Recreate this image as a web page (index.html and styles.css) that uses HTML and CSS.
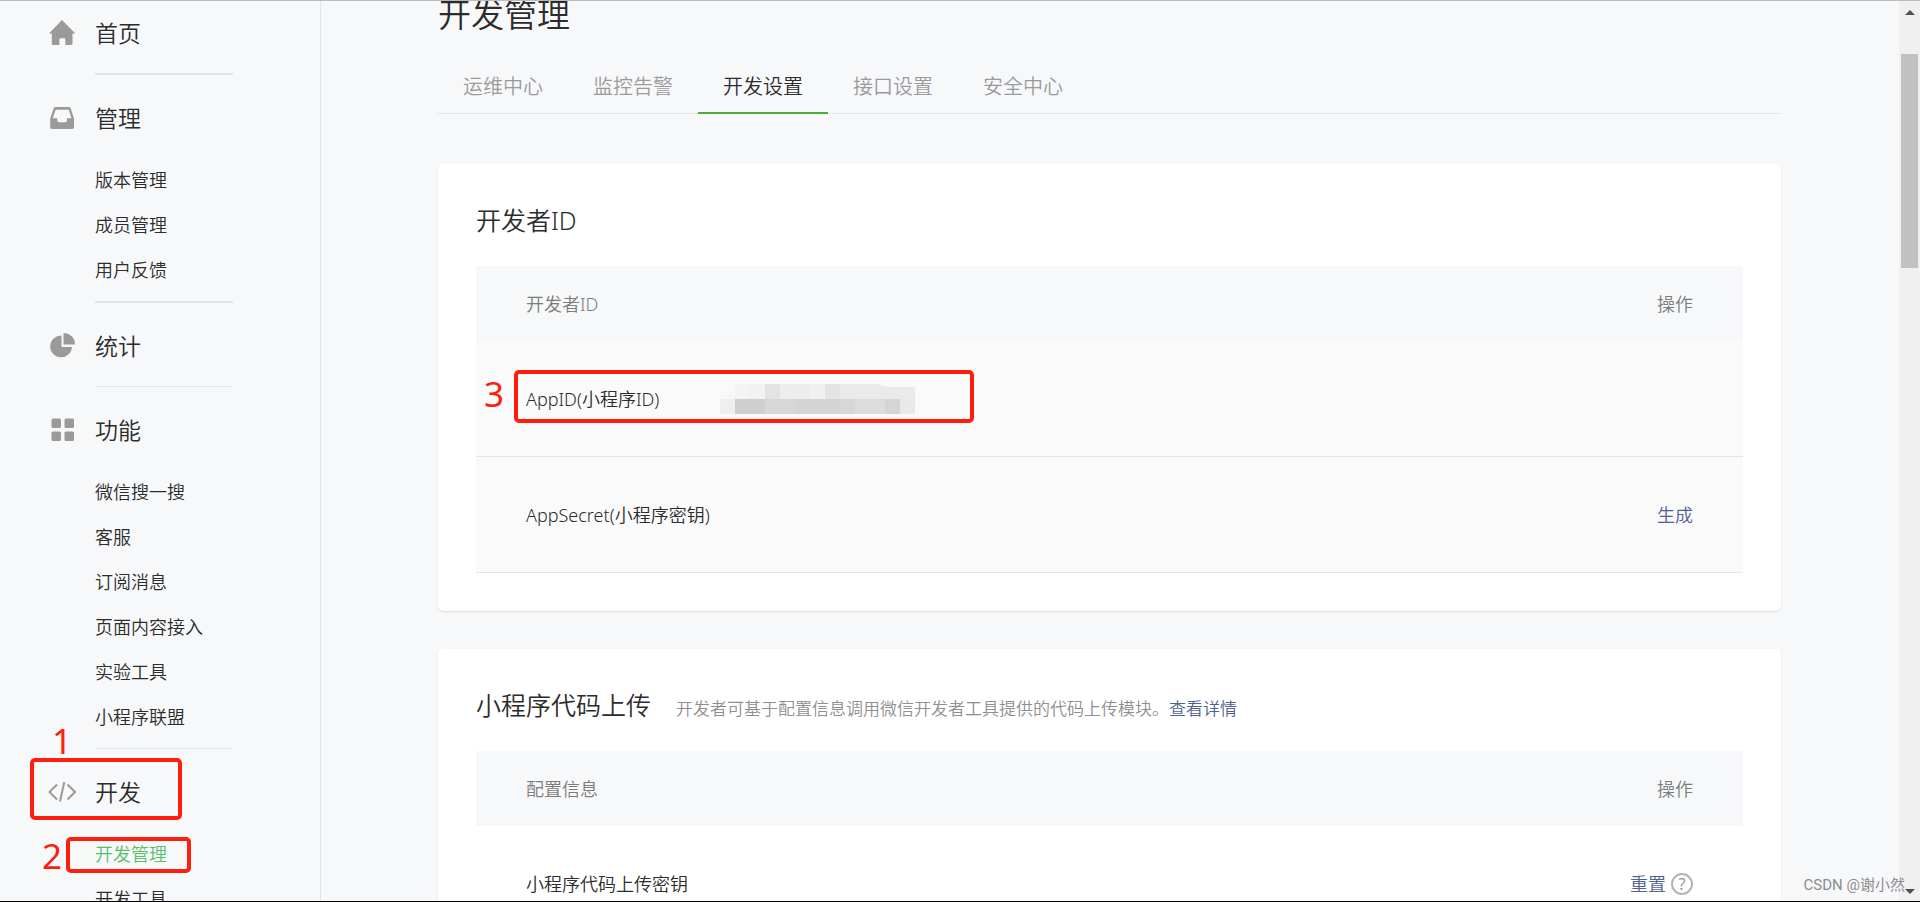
FILE: index.html
```html
<!DOCTYPE html>
<html lang="zh-CN">
<head>
<meta charset="utf-8">
<title>开发管理</title>
<link rel="stylesheet" href="styles.css">
</head>
<body>
<div class="page">
  <nav class="sidebar" aria-label="主导航">
    <section class="group">
      <a class="group-title" href="#">
        <svg class="icon" viewBox="0 0 28 28"><path d="M14 1 27.300 14.600H24.500V24.500Q24.500 26 23 26H17.300V20.500Q17.300 19.300 16.100 19.300H12.600Q11.400 19.300 11.400 20.500V26H5.300Q3.800 26 3.800 24.500V14.600H.9Z"/></svg>
        首页
      </a>
    </section>
    <section class="group thick">
      <a class="group-title" href="#">
        <svg class="icon" viewBox="0 0 28 28"><path fill-rule="evenodd" d="M7.500 3H21Q22.300 3 22.700 4.200L26 14.500V23.200Q26 25 24.200 25H4Q2.200 25 2.200 23.200V14.500L5.700 4.200Q6.200 3 7.500 3ZM7.700 5.700 4.700 14.200H9.300V16Q9.300 18.200 11.200 18.200H17.200Q19 18.200 19 16V14.200H23.400L20.700 5.700Z"/></svg>
        管理
      </a>
      <ul class="sub">
        <li><a href="#">版本管理</a></li>
        <li><a href="#">成员管理</a></li>
        <li><a href="#">用户反馈</a></li>
      </ul>
    </section>
    <section class="group thick">
      <a class="group-title" href="#">
        <svg class="icon" viewBox="0 0 28 28"><path d="M13.500 3.500A10.900 10.900 0 1 0 24 15H13.500Z"/><path d="M15.500 1A11.500 11.500 0 0 1 27 12.500H15.500Z"/></svg>
        统计
      </a>
    </section>
    <section class="group">
      <a class="group-title" href="#">
        <svg class="icon" viewBox="0 0 28 28"><rect x="3.500" y="2.500" width="9.500" height="9.500" rx="1.500"/><rect x="16.500" y="2.500" width="9.500" height="9.500" rx="1.500"/><rect x="3.500" y="15.500" width="9.500" height="9.500" rx="1.500"/><rect x="16.500" y="15.500" width="9.500" height="9.500" rx="1.500"/></svg>
        功能
      </a>
      <ul class="sub">
        <li><a href="#">微信搜一搜</a></li>
        <li><a href="#">客服</a></li>
        <li><a href="#">订阅消息</a></li>
        <li><a href="#">页面内容接入</a></li>
        <li><a href="#">实验工具</a></li>
        <li><a href="#">小程序联盟</a></li>
      </ul>
    </section>
    <section class="group">
      <div class="marked">
        <a class="group-title" href="#">
          <svg class="icon line" viewBox="0 0 28 28"><path d="M9 6.500 1.500 14 9 21.500M19.500 6.500 27 14 19.500 21.500M16.300 4 12 23.500"/></svg>
          开发
        </a>
        <span class="mark mark-one"><b class="num">1</b></span>
      </div>
      <ul class="sub">
        <li class="marked"><a class="current" href="#">开发管理</a><span class="mark mark-two"><b class="num">2</b></span></li>
        <li><a href="#">开发工具</a></li>
      </ul>
    </section>
  </nav>

  <main class="content">
    <h1 class="page-title">开发管理</h1>
    <nav class="tabs" aria-label="开发管理">
      <a class="tab" href="#">运维中心</a>
      <a class="tab" href="#">监控告警</a>
      <a class="tab active" href="#">开发设置</a>
      <a class="tab" href="#">接口设置</a>
      <a class="tab" href="#">安全中心</a>
    </nav>

    <section class="card">
      <header class="card-head"><h2>开发者ID</h2></header>
      <table class="table shaded">
        <thead><tr><th>开发者ID</th><th class="action">操作</th></tr></thead>
        <tbody>
          <tr>
            <td>
              <div class="field marked">
                <span class="field-name">AppID(小程序ID)</span>
                <svg class="mosaic" viewBox="0 0 195 30" shape-rendering="crispEdges">
                  <path fill="#f8f8f8" d="M0 15Q3 4 15 0V15Z"/>
                  <path fill="#f4f4f4" d="M15 0h15v15H15z"/><path fill="#f2f2f2" d="M30 0h15v15H30z"/><path fill="#e3e3e3" d="M45 0h15v15H45z"/><path fill="#ededed" d="M60 0h30v15H60z"/><path fill="#f0f0f0" d="M90 0h15v15H90z"/><path fill="#e4e4e4" d="M105 0h15v15h-15z"/>
                  <path fill="#eaeaea" d="M120 0h37q8 3 16 3h22v12h-75z"/>
                  <path fill="#efefef" d="M0 15h15v15H0z"/><path fill="#cfcfcf" d="M15 15h30v15H15z"/><path fill="#d7d7d7" d="M45 15h30v15H45z"/><path fill="#d4d4d4" d="M75 15h45v15H75z"/><path fill="#d7d7d7" d="M120 15h15v15h-15z"/><path fill="#dcdcdc" d="M135 15h30v15h-30z"/><path fill="#d5d5d5" d="M165 15h15v15h-15z"/><path fill="#e9e9e9" d="M180 15h15v15h-15z"/>
                </svg>
                <span class="mark mark-three"><b class="num">3</b></span>
              </div>
            </td>
            <td class="action"></td>
          </tr>
          <tr><td>AppSecret(小程序密钥)</td><td class="action"><a class="link" href="#">生成</a></td></tr>
        </tbody>
      </table>
    </section>

    <section class="card">
      <header class="card-head">
        <h2>小程序代码上传</h2>
        <p class="hint">开发者可基于配置信息调用微信开发者工具提供的代码上传模块。<a class="link" href="#">查看详情</a></p>
      </header>
      <table class="table">
        <thead><tr><th>配置信息</th><th class="action">操作</th></tr></thead>
        <tbody>
          <tr>
            <td>小程序代码上传密钥</td>
            <td class="action"><span class="ops"><a class="link" href="#">重置</a><button class="help" type="button" aria-label="帮助">?</button></span></td>
          </tr>
        </tbody>
      </table>
    </section>
  </main>

  <div class="scrollbar">
    <svg class="arrow" viewBox="0 0 10 5"><path d="M0 5 5 0 10 5Z"/></svg>
    <div class="thumb"></div>
    <svg class="arrow last" viewBox="0 0 10 5"><path d="M0 0 5 5 10 0Z"/></svg>
  </div>
  <div class="watermark">CSDN @谢小然</div>
</div>
</body>
</html>
```
FILE: styles.css
```css
* { box-sizing: border-box; }

body {
  margin: 0;
  background: #f7f8fa;
  color: #2c2c2c;
  font-family: "Noto Sans", "Noto Sans CJK SC", sans-serif;
  font-size: 18px;
  font-weight: 350;
  line-height: 24px;
}

a { color: inherit; text-decoration: none; }
ul, h1, h2, p { margin: 0; padding: 0; list-style: none; font-weight: 350; }

.page {
  position: relative;
  display: flex;
  height: 100vh;
  overflow: hidden;
  border-top: 1px solid #bbbbbd;
  border-bottom: 1px solid #000;
}

/* Sidebar */
.sidebar {
  flex: 0 0 321px;
  padding-left: 48px;
  border-right: 1px solid #e4e5e7;
}
.group + .group::before {
  content: "";
  display: block;
  width: 138px;
  height: 1px;
  margin: 0 0 23px 47px;
  background: #e4e5e7;
}
.group + .thick::before { height: 2px; }
.group:first-child { padding-top: 12px; }
.group-title {
  display: flex;
  align-items: center;
  gap: 19px;
  height: 40px;
  margin-bottom: 20px;
  font-size: 23px;
}
.icon { width: 28px; height: 28px; fill: #9a9a9a; }
.icon.line { fill: none; stroke: #9a9a9a; stroke-width: 2; }
.sub { padding: 0 0 8px 47px; }
.sub a { display: block; line-height: 45px; }
.sub .current { color: #57bf6c; }

/* Numbered highlight frames */
.marked { position: relative; }
.mark {
  position: absolute;
  border: 4px solid #ff1d0e;
  border-radius: 5px;
  pointer-events: none;
}
.num {
  position: absolute;
  color: #ff1d0e;
  font: 400 35px/36px "Noto Sans", sans-serif;
}
.mark-one { top: -14px; left: -18px; width: 152px; height: 62px; }
.mark-one .num { top: -39px; left: 18px; }
.mark-two { top: 5px; left: -29px; width: 125px; height: 36px; }
.mark-two .num { top: -3px; left: -28px; }
.mark-three { top: -17px; left: -12px; width: 460px; height: 53px; }
.mark-three .num { top: 2px; left: -34px; }

/* Content */
.content {
  flex: 1;
  min-width: 0;
  padding: 0 118px 0 117px;
}
.page-title {
  height: 58px;
  margin-top: -6px;
  font-size: 33px;
  line-height: 40px;
}
.tabs {
  display: flex;
  height: 61px;
  border-bottom: 1px solid #e4e5e7;
}
.tab {
  height: 61px;
  padding: 0 25px;
  color: #9a9a9a;
  font-size: 20px;
  line-height: 68px;
}
.tab.active { color: #2c2c2c; border-bottom: 2px solid #4eab35; }

.card {
  margin-top: 38px;
  padding: 37px 38px 38px;
  background: #fff;
  border-radius: 5px;
  box-shadow: 0 1px 2px rgba(0, 0, 0, .12);
}
.tabs + .card { margin-top: 50px; }
.card-head {
  display: flex;
  align-items: baseline;
  gap: 25px;
  margin-bottom: 27px;
}
.card-head h2 { font-size: 25px; line-height: 38px; }
.hint { color: #8f8f8f; font-size: 17px; }
.link { color: #4f6290; }

.table { width: 100%; border-collapse: separate; border-spacing: 0; }
.table th {
  height: 75px;
  padding: 0 50px;
  background: #f6f8f9;
  color: #7c7c7c;
  font-weight: 350;
  text-align: left;
}
.table td {
  height: 116px;
  padding: 0 50px;
  border-bottom: 1px solid #e4e5e7;
}
.shaded td { background: #fafafa; }
.table .action { text-align: right; white-space: nowrap; }
.field { display: flex; align-items: center; height: 24px; }
.field-name { flex: 0 0 194px; }
.mosaic { width: 195px; height: 30px; }
.ops { display: inline-flex; align-items: center; gap: 5px; }
.help {
  width: 22px;
  height: 22px;
  padding: 0;
  border: 2px solid #b4b4b4;
  border-radius: 50%;
  background: none;
  color: #9a9a9a;
  font: 400 16px/18px "Noto Sans", sans-serif;
}

/* Scrollbar */
.scrollbar {
  display: flex;
  flex: 0 0 21px;
  flex-direction: column;
  align-items: center;
  padding: 9px 0 7px;
  background: #f0f0f0;
}
.arrow { width: 10px; height: 5px; fill: #505050; }
.thumb { width: 17px; height: 214px; margin-top: 39px; background: #c1c1c1; }
.arrow.last { margin-top: auto; }

.watermark {
  position: absolute;
  right: 15px;
  bottom: 5px;
  color: #8c8c8e;
  font: 400 15px/22px Roboto, "Noto Sans CJK SC", sans-serif;
}
```
